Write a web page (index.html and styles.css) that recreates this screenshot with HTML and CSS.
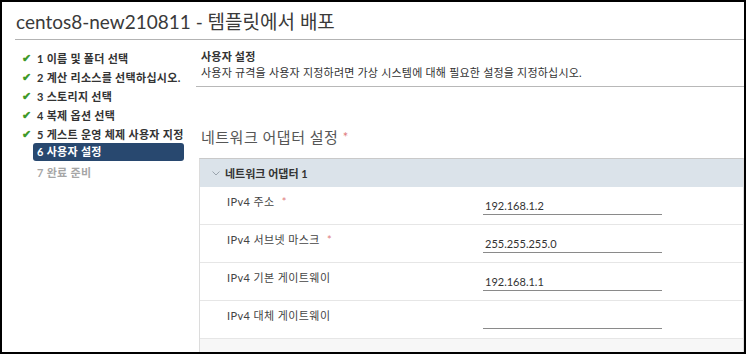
FILE: index.html
```html
<!DOCTYPE html>
<html lang="ko">
<head>
    <meta charset="UTF-8">
    <title>템플릿에서 배포</title>
    <link rel="stylesheet" href="styles.css">
</head>
<body>
<div class="frame">
    <!-- 제목 -->
    <header class="title-bar">
        <h1 class="title">centos8-new210811 - 템플릿에서 배포</h1>
    </header>

    <div class="wizard">
        <!-- 단계 목록 -->
        <nav class="steps">
            <ul>
                <li class="done"><span class="mark">✔</span><span class="label">1 이름 및 폴더 선택</span></li>
                <li class="done"><span class="mark">✔</span><span class="label">2 계산 리소스를 선택하십시오.</span></li>
                <li class="done"><span class="mark">✔</span><span class="label">3 스토리지 선택</span></li>
                <li class="done"><span class="mark">✔</span><span class="label">4 복제 옵션 선택</span></li>
                <li class="done"><span class="mark">✔</span><span class="label">5 게스트 운영 체제 사용자 지정</span></li>
                <li class="active"><span class="mark"></span><span class="label">6 사용자 설정</span></li>
                <li class="todo"><span class="mark"></span><span class="label">7 완료 준비</span></li>
            </ul>
        </nav>

        <!-- 본문 -->
        <main class="content">
            <div class="page-head">
                <div class="page-title">사용자 설정</div>
                <div class="page-desc">사용자 규격을 사용자 지정하려면 가상 시스템에 대해 필요한 설정을 지정하십시오.</div>
            </div>

            <h2 class="group-title">네트워크 어댑터 설정 <span class="req">*</span></h2>

            <section class="adapter">
                <div class="adapter-head">
                    <svg class="chevron" width="8" height="5" viewBox="0 0 8 5"><path d="M0.5 0.5 L4 4 L7.5 0.5" fill="none" stroke="#9aa4ad" stroke-width="1"/></svg>
                    <span>네트워크 어댑터 1</span>
                </div>
                <div class="row">
                    <div class="row-label">IPv4 주소 <span class="req">*</span></div>
                    <div class="field">192.168.1.2</div>
                </div>
                <div class="row">
                    <div class="row-label">IPv4 서브넷 마스크 <span class="req">*</span></div>
                    <div class="field">255.255.255.0</div>
                </div>
                <div class="row">
                    <div class="row-label">IPv4 기본 게이트웨이</div>
                    <div class="field">192.168.1.1</div>
                </div>
                <div class="row">
                    <div class="row-label">IPv4 대체 게이트웨이</div>
                    <div class="field"></div>
                </div>
                <div class="row-more"></div>
            </section>
        </main>
    </div>
</div>
</body>
</html>
```

FILE: styles.css
```css
body {
    margin: 0;
    padding: 0;
    font-family: Lato, "Noto Sans CJK KR", sans-serif;
    color: #333;
    background: #fff;
}

.frame {
    width: 746px;
    height: 354px;
    box-sizing: border-box;
    border: 2px solid #000;
    overflow: hidden;
}

/* 제목 */
.title-bar {
    margin-left: 13px;
    height: 38px;
    padding-left: 1px;
    border-bottom: 1px solid #b3b3b3;
    box-sizing: border-box;
}

.title {
    margin: 0;
    padding-top: 8px;
    font-size: 19px;
    font-weight: 400;
    line-height: 24px;
    color: #3a3a3a;
}

.wizard {
    display: flex;
}

/* 단계 목록 */
.steps {
    width: 188px;
    flex: none;
}

.steps ul {
    list-style: none;
    margin: 0;
    padding: 8px 0 0 20px;
}

.steps li {
    display: flex;
    height: 19px;
    align-items: center;
    font-size: 11px;
    font-weight: 700;
    color: #333;
    letter-spacing: 0.3px;
}

.steps .mark {
    width: 11px;
    flex: none;
    color: #3f9a2a;
    font-size: 11px;
}

.steps .label {
    padding: 0 4px;
    white-space: nowrap;
}

.steps li.active {
    height: 18px;
}

.steps li.active .label {
    flex: 1;
    margin-right: 6px;
    line-height: 18px;
    background: #28486f;
    color: #fff;
    border-radius: 3px;
}

.steps li.todo {
    margin-top: 1px;
    color: #a6a6a6;
}

/* 본문 */
.content {
    flex: 1;
    padding-left: 6px;
    min-width: 0;
}

.page-head {
    padding: 9px 0 5px 5px;
    border-bottom: 1px solid #b8b8b8;
    font-size: 11px;
    line-height: 16px;
    letter-spacing: 0.2px;
}

.page-title {
    font-weight: 700;
}

.group-title {
    margin: 40px 0 11px 5px;
    font-size: 15px;
    font-weight: 400;
    line-height: 20px;
    color: #565656;
    letter-spacing: 0.5px;
}

.req {
    color: #e07b7b;
    font-size: 11px;
    vertical-align: top;
}

.group-title .req {
    font-size: 13px;
}

.adapter {
    margin-left: 3px;
    border: 1px solid #dcdcdc;
    border-top-color: #c9c9c9;
    border-bottom: none;
}

.adapter-head {
    display: flex;
    align-items: center;
    gap: 5px;
    height: 28px;
    padding-left: 12px;
    background: #dbe3ea;
    font-size: 11px;
    font-weight: 700;
    color: #333;
}

.row {
    display: grid;
    grid-template-columns: 256px 179px;
    height: 38px;
    padding-left: 27px;
    border-bottom: 1px solid #e6e6e6;
    box-sizing: border-box;
}

.row-label {
    padding-top: 7px;
    font-size: 11px;
    line-height: 16px;
    color: #444;
    letter-spacing: 0.4px;
}

.row-label .req {
    margin-left: 4px;
}

.field {
    margin-top: 11px;
    height: 16px;
    border-bottom: 1px solid #8a8a8a;
    font-size: 11px;
    line-height: 16px;
    padding-left: 2px;
    color: #333;
}

.row-more {
    height: 20px;
    background: #f7f7f7;
}
```
